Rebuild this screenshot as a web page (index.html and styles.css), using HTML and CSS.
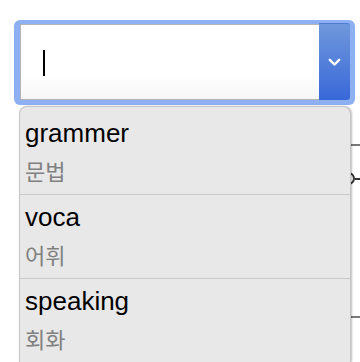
FILE: index.html
```html
<!DOCTYPE html>
<html lang="ko">
<head>
  <meta charset="UTF-8" />
  <meta name="viewport" content="width=device-width, initial-scale=1.0"/>
  <title>Category</title>
  <link rel="stylesheet" href="styles.css">
</head>
<body>
  <div class="combo">
    <div class="field"><span class="caret"></span></div>
    <div class="toggle">
      <svg width="13" height="9" viewBox="0 0 13 9"><path d="M1.8 1.8 L6.5 6.5 L11.2 1.8" fill="none" stroke="#fff" stroke-width="2.4" stroke-linecap="round" stroke-linejoin="round"/></svg>
    </div>
  </div>

  <div class="backdrop">
    <div class="rule first"></div>
    <div class="knob-row"><span class="knob"></span><span class="knob-line"></span></div>
    <div class="rule last"></div>
  </div>

  <ul class="dropdown">
    <li class="item"><div class="en">grammer</div><div class="ko">문법</div></li>
    <li class="item"><div class="en">voca</div><div class="ko">어휘</div></li>
    <li class="item"><div class="en">speaking</div><div class="ko">회화</div></li>
  </ul>
</body>
</html>
```

FILE: styles.css
```css
body {
  margin: 0;
  background: #fff;
  font-family: "Liberation Sans", Arial, "Noto Sans CJK KR", sans-serif;
  overflow: hidden;
}
.combo {
  box-sizing: border-box;
  display: flex;
  width: 341px;
  height: 85px;
  margin: 20px 0 0 14px;
  padding: 3px 5px 5px 6px;
  background: #8cb0f2;
  border-radius: 6px;
}
.field {
  flex: 1;
  margin-top: 1px;
  padding-left: 22px;
  background: linear-gradient(#fff 70%, #f6f6f6);
  border: 1px solid #b4b4b4;
  border-right: none;
}
.caret {
  display: block;
  width: 2px;
  height: 26px;
  margin-top: 25px;
  background: #000;
}
.toggle {
  width: 31px;
  display: flex;
  align-items: center;
  justify-content: center;
  background: linear-gradient(#7098dc, #3868d8);
  border-top: 1px solid #4f7bd6;
  border-radius: 0 3px 3px 0;
}
.backdrop {
  padding-left: 300px;
}
.rule {
  height: 2px;
  background: #7a7a7a;
}
.rule.first {
  margin-top: 39px;
}
.knob-row {
  display: flex;
  align-items: center;
  margin-top: 26px;
  padding-left: 42px;
}
.knob {
  box-sizing: border-box;
  width: 13px;
  height: 13px;
  border: 2px solid #333;
  border-radius: 50%;
}
.knob-line {
  flex: 1;
  height: 2px;
  background: #333;
}
.rule.last {
  margin-top: 131px;
}
.dropdown {
  position: absolute;
  left: 19px;
  top: 106px;
  width: 330px;
  height: 251px;
  margin: 0;
  padding: 4px 0 0;
  list-style: none;
  overflow: hidden;
  background: #e8e8e8;
  border: 1px solid #c6c6c6;
  border-bottom: none;
  border-radius: 8px 8px 0 0;
  box-shadow: 1px 0 2px rgba(0, 0, 0, 0.25);
}
.item {
  height: 76px;
  padding: 7px 0 0 5px;
  border-bottom: 1px solid #c9c9c9;
}
.en {
  font-size: 26px;
  line-height: 30px;
  color: #000;
}
.ko {
  margin-top: 6px;
  font-family: "Noto Sans CJK KR", sans-serif;
  font-size: 22px;
  line-height: 32px;
  color: #808080;
}
```
